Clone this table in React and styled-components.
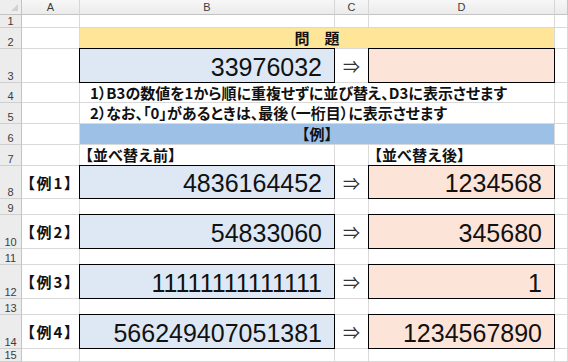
import styled, { createGlobalStyle } from 'styled-components';

const GlobalStyle = createGlobalStyle`
  html, body {
    margin: 0;
    padding: 0;
    background: #ffffff;
  }
  body {
    font-family: "Noto Sans CJK JP", "Liberation Sans", sans-serif;
  }
`;

const GRID = '#d9d9d9';
const HEAD_LINE = '#c3c3c3';
const JP = '"Noto Sans CJK JP", "Noto Sans", sans-serif';

const columns = ['A', 'B', 'C', 'D', ''];
const rowHeights = [13, 21, 34, 20, 21, 21, 21, 33, 16, 34, 16, 34, 16, 34];

const examples = [
  { row: 8, label: '【例1】', before: '4836164452', after: '1234568' },
  { row: 10, label: '【例2】', before: '54833060', after: '345680' },
  { row: 12, label: '【例3】', before: '11111111111111', after: '1' },
  { row: 14, label: '【例4】', before: '566249407051381', after: '1234567890' },
];

export default function App() {
  return (
    <>
      <GlobalStyle />
      <Sheet>
        <Corner>
          <CornerMark />
        </Corner>
        {columns.map((c, i) => (
          <ColHead key={i} $last={i === columns.length - 1}>{c}</ColHead>
        ))}

        <RowHead>1</RowHead>
        <Blank /><Blank /><Blank /><Blank /><Blank />

        <RowHead>2</RowHead>
        <Blank />
        <Merged $bg="#fee597">
          <Title>問　題</Title>
        </Merged>
        <Blank />

        <RowHead>3</RowHead>
        <Blank />
        <Boxed $bg="#dde8f4">
          <BigNum>33976032</BigNum>
        </Boxed>
        <ArrowCell>⇒</ArrowCell>
        <Boxed $bg="#fde4d8" />
        <Blank />

        <RowHead>4</RowHead>
        <Blank />
        <Note>1）B3の数値を1から順に重複せずに並び替え、D3に表示させます</Note>
        <Blank />

        <RowHead>5</RowHead>
        <Blank />
        <Note>2）なお、「0」があるときは、最後（一桁目）に表示させます</Note>
        <Blank />

        <RowHead>6</RowHead>
        <Blank />
        <Merged $bg="#9cc0e6">
          <Title>【例】</Title>
        </Merged>
        <Blank />

        <RowHead>7</RowHead>
        <Blank />
        <Heading>【並べ替え前】</Heading>
        <Blank />
        <Heading>【並べ替え後】</Heading>
        <Blank />

        {examples.map(ex => (
          <ExampleRow key={ex.row} {...ex} />
        ))}

        <RowHead>15</RowHead>
        <Blank /><Blank /><Blank /><Blank /><Blank />
      </Sheet>
    </>
  );
}

function ExampleRow({ row, label, before, after }) {
  return (
    <>
      <RowHead>{row}</RowHead>
      <LabelCell>{label}</LabelCell>
      <Boxed $bg="#dde8f4">
        <BigNum>{before}</BigNum>
      </Boxed>
      <ArrowCell>⇒</ArrowCell>
      <Boxed $bg="#fde4d8">
        <BigNum>{after}</BigNum>
      </Boxed>
      <Blank />
      {row < 14 && (
        <>
          <RowHead>{row + 1}</RowHead>
          <Blank /><Blank /><Blank /><Blank /><Blank />
        </>
      )}
    </>
  );
}

const Sheet = styled.div`
  display: grid;
  grid-template-columns: 22px 58px 255px 34px 186px 1fr;
  grid-template-rows: 15px ${rowHeights.map(h => `${h}px`).join(' ')} 1fr;
  width: 568px;
  height: 362px;
  overflow: hidden;
  background: #fff;
`;

const Corner = styled.div`
  display: flex;
  align-items: flex-end;
  justify-content: flex-end;
  padding: 0 3px 3px 0;
  background: #eeeeee;
  border-right: 1px solid ${HEAD_LINE};
  border-bottom: 1px solid ${HEAD_LINE};
  box-sizing: border-box;
`;

const CornerMark = styled.span`
  width: 0;
  height: 0;
  border-left: 7px solid transparent;
  border-bottom: 7px solid #d2d2d2;
`;

const ColHead = styled.div`
  display: flex;
  align-items: center;
  justify-content: center;
  background: linear-gradient(#f7f7f7, #ebebeb);
  border-right: 1px solid ${p => (p.$last ? HEAD_LINE : '#d6d6d6')};
  border-bottom: 1px solid ${HEAD_LINE};
  box-sizing: border-box;
  font-family: "Liberation Sans", sans-serif;
  font-size: 11px;
  color: #3c3c3c;
`;

const RowHead = styled.div`
  display: flex;
  align-items: flex-end;
  justify-content: center;
  background: #ececec;
  border-right: 1px solid ${HEAD_LINE};
  border-bottom: 1px solid #cfcfcf;
  box-sizing: border-box;
  font-family: "Liberation Sans", sans-serif;
  font-size: 11px;
  line-height: 12px;
  color: #3c3c3c;
`;

const Blank = styled.div`
  border-right: 1px solid ${GRID};
  border-bottom: 1px solid ${GRID};
  box-sizing: border-box;
`;

const Merged = styled.div`
  grid-column: span 3;
  display: flex;
  align-items: center;
  justify-content: center;
  background: ${p => p.$bg};
  border-right: 1px solid ${GRID};
  border-bottom: 1px solid ${GRID};
  box-sizing: border-box;
`;

const Title = styled.span`
  font-family: ${JP};
  font-weight: 700;
  font-size: 15px;
  line-height: 18px;
  color: #111;
`;

const Boxed = styled.div`
  position: relative;
  z-index: 1;
  margin: -1px 0 0 -1px;
  display: flex;
  align-items: center;
  justify-content: flex-end;
  padding: 2px 12px 0 0;
  background: ${p => p.$bg};
  border: 1px solid #000;
  box-sizing: border-box;
`;

const BigNum = styled.span`
  font-family: "Liberation Sans", Arial, sans-serif;
  font-size: 25px;
  line-height: 28px;
  color: #111;
`;

const ArrowCell = styled.div`
  display: flex;
  align-items: center;
  justify-content: center;
  border-right: 1px solid ${GRID};
  border-bottom: 1px solid ${GRID};
  box-sizing: border-box;
  font-family: ${JP};
  font-size: 17px;
  color: #333;
`;

const Note = styled.div`
  grid-column: span 3;
  display: flex;
  align-items: center;
  padding-left: 10px;
  border-right: 1px solid ${GRID};
  border-bottom: 1px solid ${GRID};
  box-sizing: border-box;
  font-family: ${JP};
  font-weight: 700;
  font-size: 15px;
  line-height: 18px;
  font-feature-settings: 'palt';
  white-space: nowrap;
  color: #111;
`;

const Heading = styled.div`
  display: flex;
  align-items: flex-end;
  padding-bottom: 1px;
  margin-left: -2px;
  border-right: 1px solid ${GRID};
  border-bottom: 1px solid ${GRID};
  box-sizing: border-box;
  font-family: ${JP};
  font-weight: 700;
  font-size: 15px;
  line-height: 18px;
  white-space: nowrap;
  color: #111;
`;

const LabelCell = styled.div`
  display: flex;
  align-items: center;
  justify-content: center;
  border-right: 1px solid ${GRID};
  border-bottom: 1px solid ${GRID};
  box-sizing: border-box;
  font-family: ${JP};
  font-weight: 700;
  font-size: 15px;
  letter-spacing: 2px;
  font-feature-settings: 'palt';
  color: #111;
`;
